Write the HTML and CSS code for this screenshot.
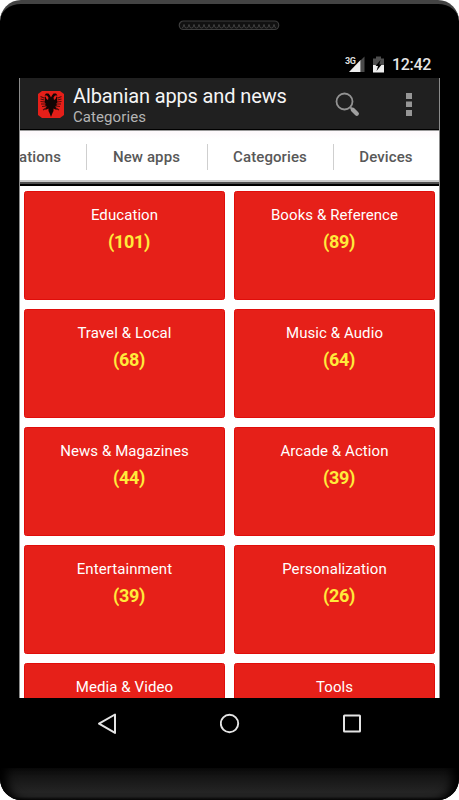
FILE: index.html
```html
<!DOCTYPE html>
<html lang="en">
<head>
<meta charset="utf-8">
<title>Albanian apps and news</title>
<link rel="stylesheet" href="styles.css">
</head>
<body>
<div class="phone">
  <div class="bezel-top">
    <svg class="speaker" width="102" height="11" viewBox="0 0 102 11">
      <defs><pattern id="mesh" x="1" width="5" height="10" patternUnits="userSpaceOnUse"><path d="M.5 4.500V6a2 2 0 0 0 4 0V4.500" fill="none" stroke="#3c3c3c"/></pattern></defs>
      <rect x="1.250" y="1" width="99.500" height="8.500" rx="4.250" fill="#111" stroke="#3d3d3d" stroke-width="1.200"/>
      <rect x="4" y="1.500" width="94" height="7.500" fill="url(#mesh)"/>
    </svg>
  </div>
  <div class="status">
    <svg class="signal" width="20" height="18" viewBox="0 0 20 18">
      <text class="net" x="0" y="9">3G</text>
      <path d="M19.500 1.500v15.500h-4V5.500z" fill="#4a4a4a"/>
      <path d="M15.500 5v12H4z" fill="#eee"/>
    </svg>
    <svg class="battery" width="11" height="17" viewBox="0 0 11 17">
      <path d="M0 2.500h3V.5h5v2h3V10H0z" fill="#4e4e4e"/>
      <path d="M0 9h11v7.500H0z" fill="#eee"/>
      <path d="M7.500 4 2.500 10H5l-1.500 5L8.700 8.500H6.300z" fill="#000"/>
    </svg>
    <span class="clock">12:42</span>
  </div>
  <div class="screen">
    <header class="appbar">
      <svg class="logo" width="26" height="27" viewBox="0 0 26 27">
        <path d="M4 0H22L26 3V24L22 27H4L0 24V3z" fill="#e51f19"/>
        <path d="M13 6.500 12 4.500 10.500 2.500 8 2.500 6.500 4.500 9 4.500 10.500 6.500 10 9 8.500 8 7.500 5.500 6.500 6 7 9 6.500 11 7.500 12.500 7 14.500 8.500 15 8 17 6 18.500 8.500 18.500 10.500 17.500 10.500 20 11.500 22 13 26 14.500 22 15.500 20 15.500 17.500 17.500 18.500 20 18.500 18 17 17.500 15 19 14.500 18.500 12.500 19.500 11 19 9 19.500 6 18.500 5.500 17.500 8 16 9 15.500 6.500 17 4.500 19.500 4.500 18 2.500 15.500 2.500 14 4.500z" fill="#120504"/>
        <path d="M2.500 5.500 6 7M2.500 8 6.500 9M2.500 10.500 7 11M3 13 7.500 13M4 15.500 8 15M23.500 5.500 20 7M23.500 8 19.500 9M23.500 10.500 19 11M23 13 18.500 13M22 15.500 18 15M5 19l3-2M21 19l-3-2" stroke="#4e0d0a" stroke-width="1.100"/>
      </svg>
      <div class="titles">
        <h1>Albanian apps and news</h1>
        <p>Categories</p>
      </div>
      <svg class="search" width="26" height="26" viewBox="0 0 26 26">
        <circle cx="9.500" cy="9.500" r="8" fill="none" stroke="#929292" stroke-width="1.800"/>
        <path d="m15 15 3 3" stroke="#929292" stroke-width="2"/>
        <path d="m17.800 17.800 4 4" stroke="#a0a0a0" stroke-width="4.300" stroke-linecap="round"/>
      </svg>
      <svg class="more" width="6" height="23" viewBox="0 0 6 23"><path d="M0 0h6v6H0zM0 8.500h6v5.500H0zM0 17h6v6H0z" fill="#969696"/></svg>
    </header>
    <nav class="tabs">
      <span class="tab tab-cut">ations</span>
      <span class="tab tab-new">New apps</span>
      <span class="tab tab-cat">Categories</span>
      <span class="tab tab-dev">Devices</span>
    </nav>
    <main class="grid">
      <section class="card"><h2>Education</h2><b>(101)</b></section>
      <section class="card"><h2>Books &amp; Reference</h2><b>(89)</b></section>
      <section class="card"><h2>Travel &amp; Local</h2><b>(68)</b></section>
      <section class="card"><h2>Music &amp; Audio</h2><b>(64)</b></section>
      <section class="card"><h2>News &amp; Magazines</h2><b>(44)</b></section>
      <section class="card"><h2>Arcade &amp; Action</h2><b>(39)</b></section>
      <section class="card"><h2>Entertainment</h2><b>(39)</b></section>
      <section class="card"><h2>Personalization</h2><b>(26)</b></section>
      <section class="card"><h2>Media &amp; Video</h2></section>
      <section class="card"><h2>Tools</h2></section>
    </main>
  </div>
  <div class="navbar">
    <svg width="20" height="22" viewBox="0 0 20 22"><path d="M18 1.500v18.400L2 10.700z" fill="none" stroke="#e4e4e4" stroke-width="2" stroke-linejoin="round"/></svg>
    <svg width="20" height="22" viewBox="0 0 20 22"><circle cx="9.500" cy="10.500" r="8.700" fill="none" stroke="#e4e4e4" stroke-width="1.900"/></svg>
    <svg width="20" height="22" viewBox="0 0 20 22"><rect x="2" y="2.500" width="16" height="16" rx=".5" fill="none" stroke="#e4e4e4" stroke-width="2"/></svg>
  </div>
  <div class="chin"></div>
</div>
</body>
</html>
```

FILE: styles.css
```css
* { box-sizing: border-box; margin: 0; padding: 0; }
body { width: 459px; height: 800px; overflow: hidden; background: #fff; font-family: Roboto, sans-serif; }
svg { display: block; flex: none; }
.phone {
  width: 459px; height: 800px; overflow: hidden;
  display: flex; flex-direction: column;
  background: #000; border-radius: 21px;
  border-top: 4px solid #434343;
}
.bezel-top { height: 46px; padding: 16px 0 0 178px; flex: none; }
.status { height: 28px; padding-right: 28px; display: flex; justify-content: flex-end; align-items: flex-start; flex: none; }
.signal { margin: 5px 8px 0 0; overflow: visible; }
.net { font: bold 9px Roboto, sans-serif; fill: #ddd; letter-spacing: -.5px; }
.battery { margin: 6px 8px 0 0; }
.clock { color: #e6e6e6; font-size: 16px; font-weight: 500; line-height: 20px; margin-top: 5px; letter-spacing: -.3px; }
.screen { width: 421px; height: 619.5px; margin-left: 19px; overflow: hidden; background: #fff; border: solid #8b8b8b; border-width: 0 1px; flex: none; }
.appbar { height: 53px; margin: 0 -1px; display: flex; align-items: flex-start; background: #202020; border-bottom: 1px solid #999; box-shadow: inset 0 -1px #000; padding-left: 19px; }
.logo { margin-top: 13px; }
.titles { width: 262px; margin: 5px 0 0 9px; flex: none; }
h1 { font-weight: 400; font-size: 20px; line-height: 26px; color: #f5f5f5; white-space: nowrap; letter-spacing: -.13px; }
.titles p { font-size: 15px; line-height: 18px; color: #b4b4b4; margin-top: -1px; letter-spacing: .08px; }
.search { margin-top: 14px; }
.more { margin: 15px 0 0 45px; }
.tabs { height: 55px; display: flex; align-items: center; background: linear-gradient(#fdf8fb, #fff 8px); border-bottom: 2px solid #000; box-shadow: inset 0 -2px #505050, inset 0 -4px #cacaca; padding-bottom: 2px; overflow: hidden; }
.tab { height: 26px; line-height: 27px; font-size: 15px; font-weight: 500; letter-spacing: .1px; color: #585858; white-space: nowrap; text-align: center; flex: none; border-right: 1px solid #cfcfcf; padding-right: 1px; }
.tab-cut { width: 67px; text-indent: -1px; text-align: left; }
.tab-new { width: 121px; }
.tab-cat { width: 126px; }
.tab-dev { width: 105px; border: 0; }
.grid { display: grid; grid-template-columns: 201px 201px; grid-auto-rows: 108.500px; gap: 9.500px 9px; padding: 5px 0 0 4px; }
.card { background: #e62019; border: 1px solid #e00d0a; border-radius: 2.500px; padding-top: 13px; text-align: center; }
.card h2 { font-size: 15px; font-weight: 400; line-height: 20px; color: #fff; letter-spacing: .08px; }
.card b { display: block; padding-left: 9px; font-size: 18px; line-height: 24px; margin-top: 5px; color: #ffeb3b; letter-spacing: -.3px; }
.navbar { height: 70.5px; padding: 15px 97px 0; display: flex; justify-content: space-between; flex: none; }
.chin { height: 32px; border-radius: 0 0 21px 21px; background: linear-gradient(#0d0d0d, #242424 75%, #242424 90%, #080808); box-shadow: inset 11px 0 10px -4px #000, inset -11px 0 10px -4px #000; flex: none; }
```
